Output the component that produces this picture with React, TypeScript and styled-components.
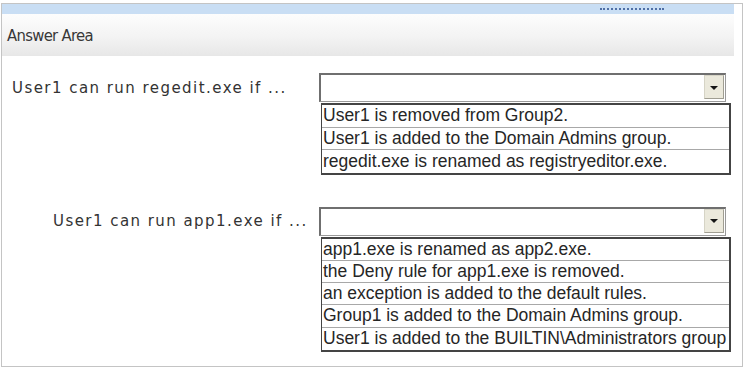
import React from "react";
import styled, { createGlobalStyle } from "styled-components";

const GlobalStyle = createGlobalStyle`
  html, body { margin: 0; padding: 0; background: #ffffff; }
  * { box-sizing: border-box; }
`;

const Frame = styled.div`
  margin: 3px 0 0 1px;
  width: 742px;
  height: 364px;
  border: 1px solid #c4c4c4;
  display: flex;
  flex-direction: column;
  background: #ffffff;
`;

const TopBar = styled.div`
  height: 10px;
  margin-right: 8px;
  background: #c9def4;
  display: flex;
  align-items: center;
  justify-content: flex-end;
  padding-right: 70px;
`;

const Dots = styled.span`
  width: 64px;
  height: 0;
  border-top: 2px dotted #4f6fa6;
`;

const Header = styled.div`
  height: 42px;
  margin-right: 8px;
  background: linear-gradient(#fdfdfd 0%, #f3f3f3 55%, #e7e7e7 100%);
  display: flex;
  align-items: center;
  padding-left: 5px;
  font-family: "DejaVu Sans Condensed", "DejaVu Sans", sans-serif;
  font-size: 16.5px;
  letter-spacing: -0.7px;
  color: #383838;
`;

const Body = styled.div`
  padding-top: 17px;
  display: flex;
  flex-direction: column;
  gap: 32px;
`;

const Question = styled.div`
  display: grid;
  grid-template-columns: 317px 1fr;
`;

const Label = styled.div<{ $indent: number }>`
  height: 29px;
  display: flex;
  align-items: center;
  padding-left: ${(p) => p.$indent}px;
  font-family: "DejaVu Sans", sans-serif;
  font-size: 15px;
  letter-spacing: 1.45px;
  color: #333333;
  white-space: nowrap;
`;

const Control = styled.div`
  display: flex;
  flex-direction: column;
`;

const SelectBox = styled.div`
  width: 407px;
  height: 29px;
  border: 1px solid #9a9a9a;
  border-top: 2px solid #6f6f6f;
  border-left: 2px solid #6f6f6f;
  display: flex;
  justify-content: flex-end;
  align-items: flex-start;
  padding-right: 1px;
  background: #ffffff;
`;

const ArrowButton = styled.div`
  width: 20px;
  height: 24px;
  background: #ebe9dc;
  border: 1px solid #d6d4c6;
  border-right-color: #a09e92;
  border-bottom-color: #a09e92;
  display: flex;
  align-items: center;
  justify-content: center;
`;

const Triangle = styled.span`
  width: 0;
  height: 0;
  border-left: 4px solid transparent;
  border-right: 4px solid transparent;
  border-top: 4px solid #151515;
  margin-top: 1px;
`;

const List = styled.div`
  margin-left: 2px;
  margin-top: 1px;
  width: 410px;
  border: 2px solid #444444;
  border-left-width: 1px;
  display: flex;
  flex-direction: column;
`;

const Option = styled.div<{ $h: number }>`
  height: ${(p) => p.$h}px;
  display: flex;
  align-items: center;
  padding-left: 1px;
  font-family: "Liberation Sans", Arial, sans-serif;
  font-size: 17.5px;
  color: #262626;
  white-space: nowrap;
  overflow: hidden;
  border-bottom: 1px solid #a8a8a8;
  &:last-child { border-bottom: none; }
`;

type Q = { label: string; indent: number; rowH: number; options: string[] };

const questions: Q[] = [
  {
    label: "User1 can run regedit.exe if ...",
    indent: 10,
    rowH: 22.6,
    options: [
      "User1 is removed from Group2.",
      "User1 is added to the Domain Admins group.",
      "regedit.exe is renamed as registryeditor.exe.",
    ],
  },
  {
    label: "User1 can run app1.exe if ...",
    indent: 51,
    rowH: 22.2,
    options: [
      "app1.exe is renamed as app2.exe.",
      "the Deny rule for app1.exe is removed.",
      "an exception is added to the default rules.",
      "Group1 is added to the Domain Admins group.",
      "User1 is added to the BUILTIN\\Administrators group",
    ],
  },
];

export default function App() {
  return (
    <>
      <GlobalStyle />
      <Frame>
        <TopBar>
          <Dots />
        </TopBar>
        <Header>Answer Area</Header>
        <Body>
          {questions.map((q) => (
            <Question key={q.label}>
              <Label $indent={q.indent}>{q.label}</Label>
              <Control>
                <SelectBox>
                  <ArrowButton>
                    <Triangle />
                  </ArrowButton>
                </SelectBox>
                <List>
                  {q.options.map((o) => (
                    <Option key={o} $h={q.rowH}>
                      {o}
                    </Option>
                  ))}
                </List>
              </Control>
            </Question>
          ))}
        </Body>
      </Frame>
    </>
  );
}
